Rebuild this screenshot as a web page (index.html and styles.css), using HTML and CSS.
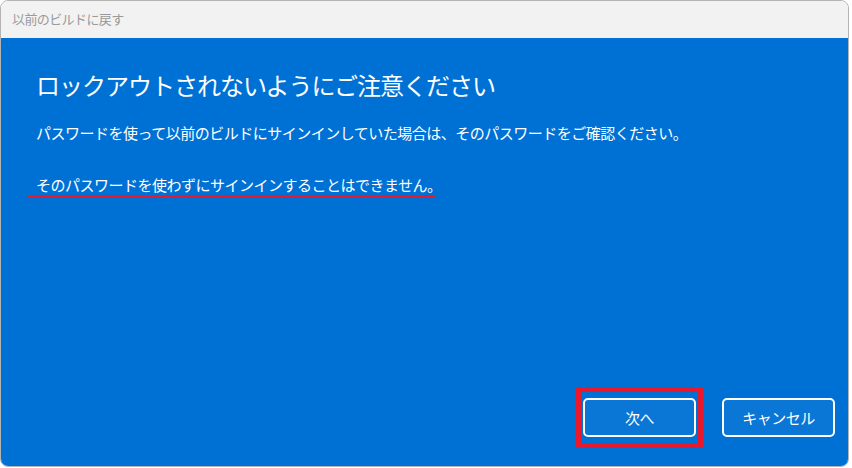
FILE: index.html
```html
<!DOCTYPE html>
<html lang="ja">

<head>
  <meta charset="UTF-8">
  <meta name="viewport" content="width=device-width, initial-scale=1.0">
  <title>以前のビルドに戻す</title>
  <link rel="stylesheet" href="styles.css">
</head>

<body>
  <div class="window">
    <div class="title-bar">以前のビルドに戻す</div>

    <div class="panel">
      <div class="content">
        <h1 class="heading">ロックアウトされないようにご注意ください</h1>
        <p class="text">パスワードを使って以前のビルドにサインインしていた場合は、そのパスワードをご確認ください。</p>
        <p class="text">
          <span class="marked">そのパスワードを使わずにサインインすることはできません。</span>
        </p>
      </div>

      <div class="footer">
        <div class="highlight">
          <button class="btn">次へ</button>
        </div>
        <button class="btn">キャンセル</button>
      </div>
    </div>
  </div>
</body>

</html>
```

FILE: styles.css
```css
body {
  font-family: "Noto Sans CJK JP", "Noto Sans", sans-serif;
  margin: 0;
  padding: 0;
  background-color: #fff;
  width: 852px;
  height: 468px;
  overflow: hidden;
}

.window {
  width: 849px;
  height: 467px;
  border: 1px solid #b4b4b4;
  border-radius: 8px;
  overflow: hidden;
  display: flex;
  flex-direction: column;
  box-sizing: border-box;
}

.title-bar {
  height: 37px;
  flex-shrink: 0;
  background-color: #f2f2f2;
  color: #9a9a9a;
  font-size: 13px;
  line-height: 36px;
  padding-left: 11px;
  letter-spacing: -0.6px;
}

.panel {
  flex: 1;
  background-color: #0071d4;
  color: #fff;
  display: flex;
  flex-direction: column;
  justify-content: space-between;
}

.content {
  padding: 30px 0 0 35px;
}

.heading {
  margin: 0;
  font-weight: normal;
  font-size: 24px;
  letter-spacing: -1px;
  line-height: 34px;
}

.text {
  margin: 20px 0 0;
  font-size: 15px;
  letter-spacing: -0.5px;
  line-height: 22px;
}

.text + .text {
  margin-top: 30px;
}

/* red underline annotation */
.marked {
  display: inline-block;
  box-sizing: border-box;
  width: 407px;
  white-space: nowrap;
  margin-left: -8px;
  padding-left: 8px;
  line-height: 21px;
  border-bottom: 3px solid #e8192c;
}

.footer {
  display: flex;
  justify-content: flex-end;
  align-items: center;
  gap: 19px;
  padding: 0 13px 18px 0;
}

/* red box annotation */
.highlight {
  border: 5px solid #e8192c;
  padding: 6px 2px;
  display: flex;
}

.btn {
  width: 113px;
  height: 39px;
  border: 2px solid #fff;
  border-radius: 5px;
  background-color: #0a76d6;
  color: #fff;
  font-family: "Noto Sans CJK JP", "Noto Sans", sans-serif;
  font-size: 15px;
  letter-spacing: -0.5px;
  cursor: pointer;
  padding: 0;
}
```
